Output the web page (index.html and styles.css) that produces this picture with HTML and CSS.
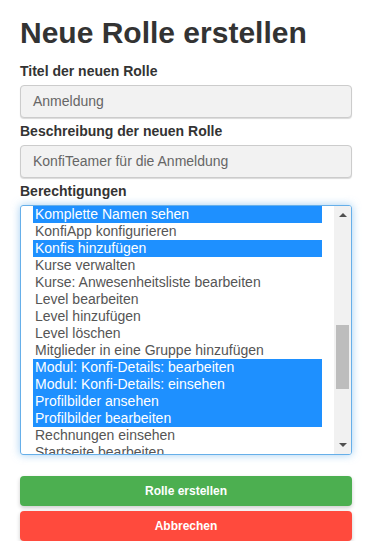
FILE: index.html
```html
<!DOCTYPE html>
<html lang="de">
<head>
  <meta charset="UTF-8">
  <title>Neue Rolle erstellen</title>
  <link rel="stylesheet" href="styles.css">
</head>
<body>
  <div class="page">
    <h1>Neue Rolle erstellen</h1>

    <label class="field-label">Titel der neuen Rolle</label>
    <div class="input">Anmeldung</div>

    <label class="field-label">Beschreibung der neuen Rolle</label>
    <div class="input">KonfiTeamer für die Anmeldung</div>

    <label class="field-label">Berechtigungen</label>
    <div class="listbox">
      <div class="options">
        <div class="option selected">Komplette Namen sehen</div>
        <div class="option">KonfiApp konfigurieren</div>
        <div class="option selected">Konfis hinzufügen</div>
        <div class="option">Kurse verwalten</div>
        <div class="option">Kurse: Anwesenheitsliste bearbeiten</div>
        <div class="option">Level bearbeiten</div>
        <div class="option">Level hinzufügen</div>
        <div class="option">Level löschen</div>
        <div class="option">Mitglieder in eine Gruppe hinzufügen</div>
        <div class="option selected">Modul: Konfi-Details: bearbeiten</div>
        <div class="option selected">Modul: Konfi-Details: einsehen</div>
        <div class="option selected">Profilbilder ansehen</div>
        <div class="option selected">Profilbilder bearbeiten</div>
        <div class="option">Rechnungen einsehen</div>
        <div class="option">Startseite bearbeiten</div>
      </div>
      <div class="scrollbar">
        <span class="arrow up"></span>
        <div class="track"><div class="thumb"></div></div>
        <span class="arrow down"></span>
      </div>
    </div>

    <div class="actions">
      <button class="btn btn-create">Rolle erstellen</button>
      <button class="btn btn-cancel">Abbrechen</button>
    </div>
  </div>
</body>
</html>
```
FILE: styles.css
```css
body {
  margin: 0;
  font-family: "Liberation Sans", Arial, sans-serif;
  background: #fff;
  color: #333;
}

.page {
  padding: 16px 21px 0 20px;
}

h1 {
  margin: 0 0 12px;
  font-size: 30px;
  line-height: 33px;
  font-weight: bold;
  color: #333;
}

.field-label {
  display: block;
  font-size: 14px;
  line-height: 20px;
  font-weight: bold;
  margin-bottom: 4px;
}

.input {
  height: 31px;
  box-sizing: content-box;
  padding: 0 12px;
  line-height: 31px;
  font-size: 14px;
  color: #666;
  background: #f2f2f2;
  border: 1px solid #ccc;
  border-radius: 4px;
  box-shadow: 0 1px 1px rgba(0, 0, 0, 0.15);
  margin-bottom: 3px;
}

.listbox {
  display: flex;
  height: 248px;
  border: 1px solid #66afe9;
  border-radius: 3px;
  box-shadow: 0 0 8px rgba(102, 175, 233, 0.6);
  overflow: hidden;
}

.options {
  flex: 1;
  padding: 0 12px;
  overflow: hidden;
}

.option {
  padding: 0 2px 1px;
  font-size: 14px;
  line-height: 16px;
  color: #555;
  white-space: nowrap;
}

.option.selected {
  background: #1e90ff;
  color: #fff;
}

.scrollbar {
  width: 17px;
  background: #f1f1f1;
  display: flex;
  flex-direction: column;
  align-items: center;
}

.arrow {
  width: 0;
  height: 0;
  border-left: 4px solid transparent;
  border-right: 4px solid transparent;
}

.arrow.up {
  margin: 7px 0 6px;
  border-bottom: 4px solid #505050;
}

.arrow.down {
  margin: 6px 0 7px;
  border-top: 4px solid #505050;
}

.track {
  flex: 1;
  width: 100%;
  padding: 0 2px;
  box-sizing: border-box;
  padding-top: 102px;
}

.thumb {
  height: 64px;
  background: #bdbdbd;
}

.actions {
  display: flex;
  flex-direction: column;
  gap: 5px;
  margin-top: 21px;
}

.btn {
  height: 30px;
  border: none;
  border-radius: 4px;
  font-family: "Liberation Sans", Arial, sans-serif;
  font-size: 12px;
  font-weight: bold;
  color: #fff;
  box-shadow: 0 2px 4px rgba(0, 0, 0, 0.2);
}

.btn-create {
  background: #4caf50;
}

.btn-cancel {
  background: #ff4a3d;
}
```
